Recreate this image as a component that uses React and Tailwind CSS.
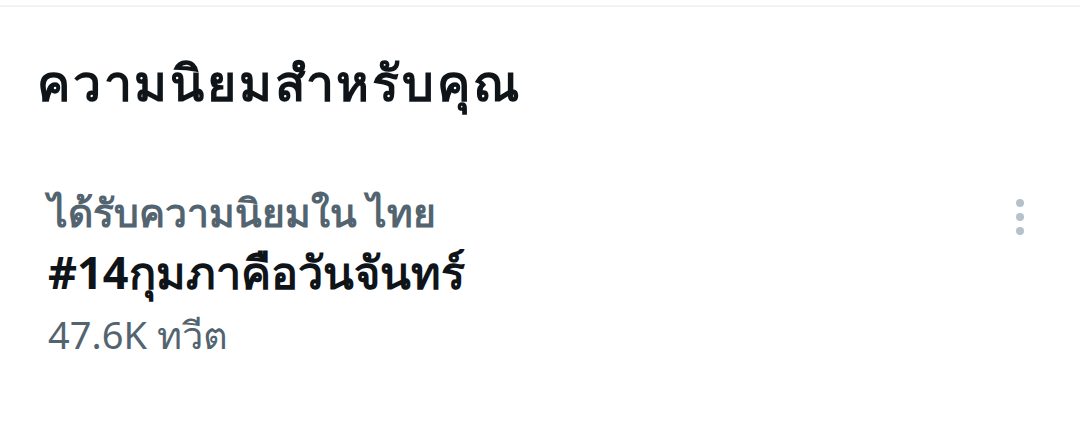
export default function App() {
  return (
    <div className="w-[1080px] h-[437px] bg-white overflow-hidden" style={{ fontFamily: '"Noto Sans", "DejaVu Sans", sans-serif' }}>
      <div className="h-[5px]" />
      <div className="h-[2px] bg-[#eff3f4]" />
      <div className="pl-[37px] pt-[45px]">
        <h2 className="text-[50px] leading-[60px] font-bold tracking-[2.8px] text-[#0f1419]">ความนิยมสำหรับคุณ</h2>
      </div>
      <div className="flex items-start justify-between pl-[48px] pr-[56px] pt-[70px]">
        <div className="flex flex-col">
          <span className="text-[39px] leading-[60px] font-bold text-[#536471]">ได้รับความนิยมใน ไทย</span>
          <span className="text-[45px] leading-[60px] font-bold text-[#0f1419]">#14กุมภาคือวันจันทร์</span>
          <span className="text-[38px] leading-[64px] text-[#536471]">47.6K ทวีต</span>
        </div>
        <div className="flex flex-col gap-[6px] pt-[17px]">
          <span className="block w-[8px] h-[8px] rounded-full bg-[#b5c2ca]" />
          <span className="block w-[8px] h-[8px] rounded-full bg-[#b5c2ca]" />
          <span className="block w-[8px] h-[8px] rounded-full bg-[#b5c2ca]" />
        </div>
      </div>
    </div>
  );
}
